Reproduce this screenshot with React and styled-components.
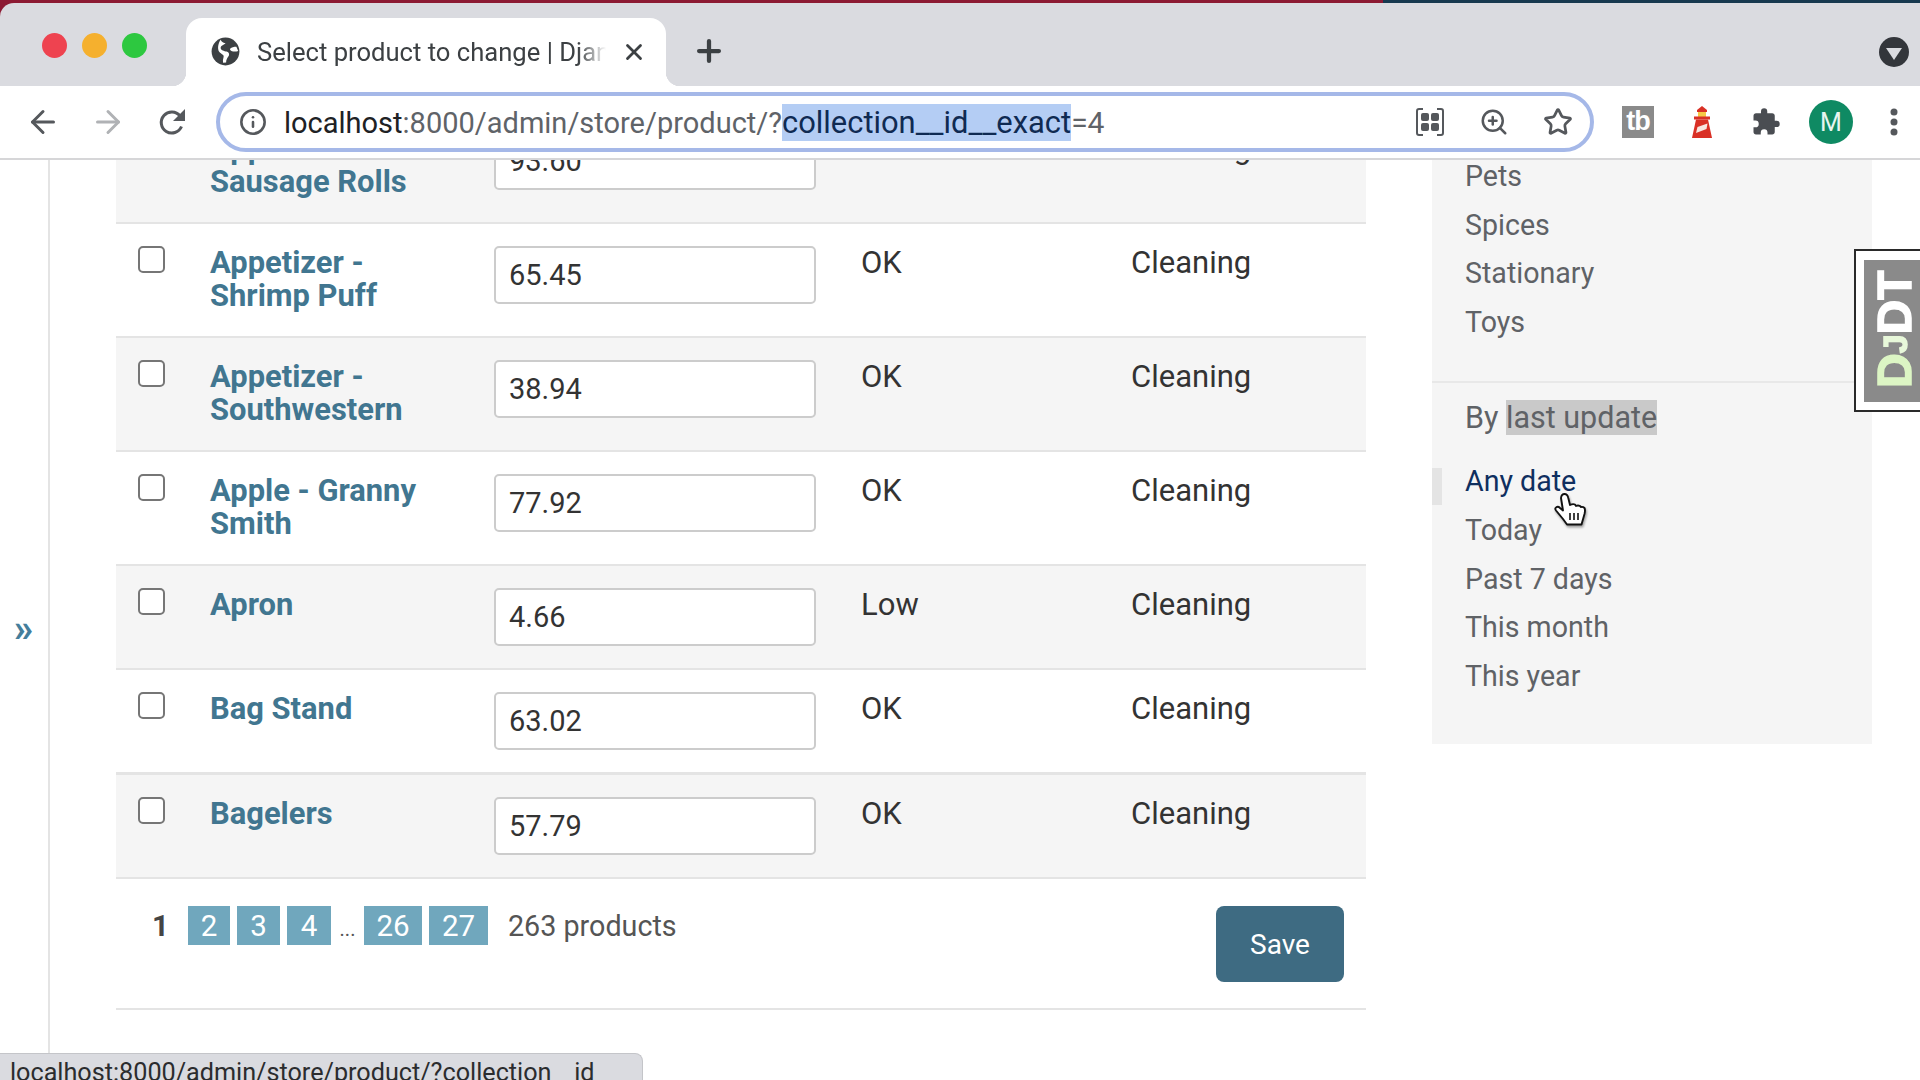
import React from "react";
import styled, { createGlobalStyle } from "styled-components";
import { ArrowLeft, ArrowRight, Info, ZoomIn, Star, Plus, X } from "lucide-react";

const GlobalStyle = createGlobalStyle`
  html, body { margin: 0; padding: 0; height: 100%; background: #fff; overflow: hidden; }
  * { box-sizing: border-box; }
  body { font-family: Roboto, "Liberation Sans", sans-serif; }
`;

const Screen = styled.div`
  position: relative;
  width: 1920px;
  height: 1080px;
  display: flex;
  flex-direction: column;
  overflow: hidden;
  background: linear-gradient(to right, #8c1a33 1383px, #17394f 1383px);
`;

const TabStrip = styled.div`
  height: 83px;
  margin-top: 3px;
  flex: none;
  background: #dadbe0;
  border-top-left-radius: 14px;
  display: flex;
  align-items: flex-end;
  padding-left: 41px;
`;

const Lights = styled.div`
  display: flex;
  gap: 15px;
  align-self: flex-start;
  margin: 30px 0 0 1px;
  width: 144px;
`;

const Light = styled.span`
  width: 25px;
  height: 25px;
  border-radius: 50%;
  background: ${p => p.color};
`;

const Tab = styled.div`
  position: relative;
  width: 480px;
  height: 68px;
  background: #fff;
  border-radius: 16px 16px 0 0;
  display: flex;
  align-items: center;
  padding: 0 0 1px 25px;
  color: #3c4043;
  &::before, &::after {
    content: "";
    position: absolute;
    bottom: 0;
    width: 14px;
    height: 14px;
  }
  &::before {
    left: -14px;
    background: radial-gradient(circle at 0 0, transparent 14px, #fff 14.5px);
  }
  &::after {
    right: -14px;
    background: radial-gradient(circle at 100% 0, transparent 14px, #fff 14.5px);
  }
`;

const TabTitle = styled.span`
  margin-left: 17px;
  width: 349px;
  font-size: 25.6px;
  white-space: nowrap;
  overflow: hidden;
  -webkit-mask-image: linear-gradient(to right, #000 92%, transparent 100%);
  mask-image: linear-gradient(to right, #000 92%, transparent 100%);
`;

const TabClose = styled.span`
  margin-left: 15px;
  display: flex;
`;

const NewTab = styled.span`
  margin: 0 0 7px 26px;
  height: 56px;
  display: flex;
  align-items: center;
  color: #3c4043;
`;

const TabMenu = styled.span`
  margin: 0 11px 19px auto;
  width: 30px;
  height: 30px;
  border-radius: 50%;
  background: #33363b;
  display: flex;
  align-items: center;
  justify-content: center;
  &::after {
    content: "";
    border-left: 8px solid transparent;
    border-right: 8px solid transparent;
    border-top: 12px solid #dadbe0;
    margin-top: 3px;
  }
`;

const Toolbar = styled.div`
  height: 74px;
  flex: none;
  background: #fff;
  border-bottom: 2px solid #d6d6d8;
  display: flex;
  align-items: center;
  color: #55585c;
`;

const NavButton = styled.span`
  width: ${p => p.w}px;
  display: flex;
  justify-content: center;
  color: ${p => (p.off ? "#b0b2b5" : "#55585c")};
`;

const UrlBar = styled.div`
  width: 1378px;
  height: 60px;
  border: 4px solid #a5b8e8;
  border-radius: 30px;
  display: flex;
  align-items: center;
  padding-left: 19px;
  padding-right: 17px;
`;

const UrlText = styled.div`
  margin-left: 17px;
  font-size: 29px;
  white-space: nowrap;
  color: #5f6368;
  flex: 1;
`;

const UrlHost = styled.span`
  color: #202124;
`;

const UrlSelected = styled.span`
  background: #b4cdf4;
  color: #0f2a52;
  font-size: 30.9px;
`;

const UrlEnd = styled.span`
  font-size: 30px;
`;

const UrlIcons = styled.div`
  display: flex;
  align-items: center;
  gap: 34px;
`;

const Extensions = styled.div`
  display: flex;
  align-items: center;
  margin-left: 28px;
`;

const TbBadge = styled.span`
  width: 32px;
  height: 32px;
  background: #8a8a8a;
  color: #fff;
  font-family: "Liberation Sans", sans-serif;
  font-weight: 700;
  font-size: 27px;
  line-height: 31px;
  letter-spacing: -1px;
  text-align: center;
  margin-right: 37px;
`;

const ExtIcon = styled.span`
  display: flex;
  width: ${p => p.w}px;
  margin-right: ${p => p.gap}px;
`;

const Avatar = styled.span`
  width: 44px;
  height: 44px;
  border-radius: 50%;
  background: #0f8a63;
  color: #e6f5ef;
  font-size: 25px;
  display: flex;
  align-items: center;
  justify-content: center;
  margin-right: 37px;
`;

const Page = styled.div`
  flex: 1;
  display: flex;
  overflow: hidden;
  background: #fff;
`;

const NavToggle = styled.div`
  width: 50px;
  flex: none;
  border-right: 2px solid #e4e4e4;
  display: flex;
  align-items: center;
  justify-content: center;
  padding: 15px 1px 0 0;
  color: #447e9b;
  font-size: 39px;
  font-weight: 700;
`;

const Scrolled = styled.div`
  display: flex;
  align-items: flex-start;
  margin-top: -50px;
  padding-left: 66px;
  gap: 66px;
`;

const Results = styled.div`
  width: 1250px;
  flex: none;
`;

const Row = styled.div`
  display: grid;
  grid-template-columns: 94px 284px 367px 270px 1fr;
  padding: 22px 0;
  background: ${p => (p.shaded ? "#f5f5f5" : "#fff")};
  border-bottom: ${p => (p.thick ? 3 : 2)}px solid #e4e4e4;
`;

const CheckCell = styled.div`
  padding-left: 22px;
`;

const Check = styled.input.attrs({ type: "checkbox" })`
  appearance: none;
  display: block;
  width: 27px;
  height: 27px;
  margin: 0;
  background: #fff;
  border: 2px solid #767676;
  border-radius: 5px;
`;

const ProductName = styled.a`
  display: block;
  margin: 0 30px 2px 0;
  font-size: 30.9px;
  line-height: 33px;
  font-weight: 700;
  color: #417690;
`;

const PriceInput = styled.input`
  display: block;
  width: 322px;
  height: 58px;
  padding: 0 13px;
  font-family: inherit;
  font-size: 29px;
  color: #333;
  background: #fff;
  border: 2px solid #ccc;
  border-radius: 5px;
`;

const Cell = styled.div`
  font-size: 31px;
  line-height: 33px;
  color: #333;
`;

const Footer = styled.div`
  height: 131px;
  padding: 27px 22px 0 36px;
  border-bottom: 2px solid #e4e4e4;
  display: flex;
  justify-content: space-between;
  align-items: flex-start;
`;

const Paginator = styled.div`
  display: flex;
  align-items: center;
  height: 39px;
  color: #555;
  font-size: 29.5px;
`;

const CurrentPage = styled.span`
  width: 36px;
  font-weight: 700;
  color: #444;
`;

const PageLink = styled.a`
  height: 39px;
  width: ${p => p.w}px;
  margin-right: 7px;
  background: #70a7bd;
  color: #fff;
  display: flex;
  align-items: center;
  justify-content: center;
`;

const Dots = styled.span`
  width: 19px;
  margin-right: 7px;
  font-size: 20px;
  text-align: center;
  padding-top: 7px;
`;

const Count = styled.span`
  margin-left: 13px;
  font-size: 28.7px;
`;

const SaveButton = styled.button`
  width: 128px;
  height: 76px;
  border: 0;
  border-radius: 8px;
  background: #3e6b82;
  color: #fff;
  font-family: inherit;
  font-size: 28px;
`;

const Filters = styled.div`
  width: 440px;
  flex: none;
  background: #f5f5f5;
  padding-top: 42px;
  height: 634px;
`;

const FilterList = styled.div`
  padding-bottom: ${p => p.pb || 0}px;
`;

const FilterItem = styled.a`
  position: relative;
  display: block;
  height: 48.6px;
  line-height: 48.6px;
  padding-left: 33px;
  font-size: 28.6px;
  color: ${p => (p.selected ? "#0f2f5f" : "#5f6266")};
  ${p =>
    p.selected &&
    `&::before {
      content: "";
      position: absolute;
      left: 0;
      top: 11px;
      width: 10px;
      height: 37px;
      background: #e4e4e4;
    }`}
`;

const FilterHeading = styled.div`
  border-top: 2px solid #e8e8e8;
  padding: 17px 0 21px 33px;
  height: 76px;
  font-size: 30.5px;
  line-height: 36px;
  color: #5f6266;
`;

const Marked = styled.span`
  background: #c9c9c9;
`;

const DebugHandle = styled.div`
  position: absolute;
  right: 0;
  top: 249px;
  width: 66px;
  height: 163px;
  border: 2px solid #2a2a2a;
  border-right: 0;
  background: #fff;
  padding: 9px 0 8px 8px;
`;

const DebugFace = styled.div`
  height: 100%;
  background: #8a8a8a;
  overflow: hidden;
  display: flex;
  justify-content: center;
  align-items: center;
  padding-right: 6px;
  font-family: "Liberation Sans", sans-serif;
  font-weight: 700;
  font-size: 48px;
  line-height: 50px;
  color: #fff;
  -webkit-text-stroke: 1.5px currentColor;
  writing-mode: vertical-rl;
  transform: rotate(180deg);
`;

const DebugLabel = styled.span`
  margin-top: 3px;
`;

const DebugD = styled.span`
  color: #dcf5c4;
`;

const DebugJ = styled.span`
  color: #e8f8da;
  font-size: 34px;
`;

const StatusBar = styled.div`
  position: absolute;
  left: 0;
  bottom: 0;
  width: 643px;
  height: 27px;
  background: #dadbe0;
  border-top: 1px solid #c4c5c9;
  border-right: 1px solid #c4c5c9;
  border-top-right-radius: 8px;
  padding-left: 10px;
  font-size: 25.2px;
  line-height: 37px;
  color: #2b2c2e;
  white-space: nowrap;
  overflow: hidden;
`;

const HandCursor = styled.span`
  position: absolute;
  left: 1540px;
  top: 480px;
  display: flex;
  filter: drop-shadow(1px 2px 1px rgba(0, 0, 0, 0.35));
`;

const Globe = () => (
  <svg width="29" height="29" viewBox="0 0 24 24">
    <circle cx="12" cy="12" r="11.5" fill="#3c4043" />
    <path d="M8 2.500c1 2 3 2.500 4 2.500-1 1.500-4 2-4 4s3 2.500 5 3 2.500 2.500 1.500 4-2 3-2 5l-2.500.3c-.5-2 .5-4 .5-5.500s-3-2-4-4-1-6 1.500-9.800zM21 8c-2 0-4 .5-5 1.500s1 2.500 3 2.500 2.500-.3 3.500-.5z" fill="#fff" />
  </svg>
);

const ReloadIcon = () => (
  <svg width="30" height="28" viewBox="0 0 30 28" fill="none">
    <path d="M23.500 18.500a10.500 10.500 0 1 1-1.500-10.500" stroke="#55585c" strokeWidth="3" />
    <path d="M27 1v12H15z" fill="#55585c" />
  </svg>
);

const QrIcon = () => (
  <svg width="30" height="30" viewBox="0 0 30 30" fill="none" stroke="#55585c" strokeWidth="2">
    <path d="M8 2H4a2 2 0 0 0-2 2v22a2 2 0 0 0 2 2h4M22 2h4a2 2 0 0 1 2 2v22a2 2 0 0 1-2 2h-4" />
    <rect x="6" y="6" width="8" height="8" rx="2" fill="#55585c" stroke="none" />
    <rect x="16" y="6" width="8" height="8" rx="2" fill="#55585c" stroke="none" />
    <rect x="6" y="16" width="8" height="8" rx="2" fill="#55585c" stroke="none" />
    <rect x="16" y="16" width="8" height="8" rx="2" fill="#55585c" stroke="none" />
  </svg>
);

const Lighthouse = () => (
  <svg width="22" height="32" viewBox="0 0 22 32">
    <path d="M11 0l5 4v2H6V4z" fill="#d93025" />
    <rect x="7" y="6" width="8" height="5" fill="#f6c945" />
    <rect x="3" y="10.500" width="16" height="3" fill="#d93025" />
    <path d="M5 13.500h12l4 18.500H1z" fill="#d93025" />
    <path d="M5 27l1.500-6 10-3.500-1 5.500z" fill="#f7e6e0" />
  </svg>
);

const PuzzleIcon = () => (
  <svg width="30" height="32" viewBox="0 0 24 24" fill="#4a4d52">
    <path d="M20.500 11H19V7c0-1.100-.9-2-2-2h-4V3.500a2.500 2.500 0 0 0-5 0V5H4c-1.100 0-2 .9-2 2v3.800h1.500a2.700 2.700 0 0 1 0 5.400H2V20c0 1.100.9 2 2 2h3.800v-1.500a2.700 2.700 0 0 1 5.400 0V22H17c1.100 0 2-.9 2-2v-4h1.500a2.500 2.500 0 0 0 0-5z" />
  </svg>
);

const DotsIcon = () => (
  <svg width="8" height="30" viewBox="0 0 8 30" fill="#55585c">
    <circle cx="4" cy="5" r="3.500" />
    <circle cx="4" cy="15" r="3.500" />
    <circle cx="4" cy="25" r="3.500" />
  </svg>
);

const HandIcon = () => (
  <svg width="70" height="70" viewBox="0 0 70 70">
    <path
      d="M21 18q.5-4 3.500-4 3 0 3.800 4l1.700 7q3-1.500 5-.5l1 1.500q2-1 4 0l1 1q2-.5 3.500 1 1 2 0 6l-3 10.500H27l-4-5.500-7-8.500q-1.500-2 0-3 2-1.500 4 .5l3 2.500z"
      fill="#fff"
      stroke="#111"
      strokeWidth="1.900"
      strokeLinejoin="round"
    />
    <path d="M30 33v7M34 33v7M38 33v7" stroke="#111" strokeWidth="1.600" />
  </svg>
);

const products = [
  { name: "Appetizer - Sausage Rolls", price: "93.60", status: "OK" },
  { name: "Appetizer - Shrimp Puff", price: "65.45", status: "OK" },
  { name: "Appetizer - Southwestern", price: "38.94", status: "OK" },
  { name: "Apple - Granny Smith", price: "77.92", status: "OK" },
  { name: "Apron", price: "4.66", status: "Low" },
  { name: "Bag Stand", price: "63.02", status: "OK" },
  { name: "Bagelers", price: "57.79", status: "OK" },
];

const collections = ["Pets", "Spices", "Stationary", "Toys"];
const dates = ["Any date", "Today", "Past 7 days", "This month", "This year"];
const pages = [["2", 42], ["3", 43], ["4", 44]];
const lastPages = [["26", 58], ["27", 59]];

const App = () => (
  <Screen>
    <GlobalStyle />
    <TabStrip>
      <Lights>
        <Light color="#ee4350" />
        <Light color="#f5b02e" />
        <Light color="#2dc840" />
      </Lights>
      <Tab>
        <Globe />
        <TabTitle>Select product to change | Django site admin</TabTitle>
        <TabClose><X size={26} strokeWidth={2.6} /></TabClose>
      </Tab>
      <NewTab><Plus size={34} strokeWidth={3} /></NewTab>
      <TabMenu />
    </TabStrip>
    <Toolbar>
      <NavButton w={86}><ArrowLeft size={36} strokeWidth={2} /></NavButton>
      <NavButton w={44} off><ArrowRight size={36} strokeWidth={2} /></NavButton>
      <NavButton w={86}><ReloadIcon /></NavButton>
      <UrlBar>
        <Info size={28} strokeWidth={2.2} />
        <UrlText>
          <UrlHost>localhost</UrlHost>:8000/admin/store/product/?
          <UrlSelected>collection__id__exact</UrlSelected><UrlEnd>=4</UrlEnd>
        </UrlText>
        <UrlIcons>
          <QrIcon />
          <ZoomIn size={30} strokeWidth={2} />
          <Star size={30} strokeWidth={2.2} />
        </UrlIcons>
      </UrlBar>
      <Extensions>
        <TbBadge>tb</TbBadge>
        <ExtIcon w={22} gap={38}><Lighthouse /></ExtIcon>
        <ExtIcon w={30} gap={28}><PuzzleIcon /></ExtIcon>
        <Avatar>M</Avatar>
        <DotsIcon />
      </Extensions>
    </Toolbar>
    <Page>
      <NavToggle>»</NavToggle>
      <Scrolled>
        <Results>
          {products.map((p, i) => (
            <Row key={p.name} shaded={i % 2 === 0} thick={i === 5}>
              <CheckCell><Check /></CheckCell>
              <ProductName>{p.name}</ProductName>
              <div><PriceInput defaultValue={p.price} /></div>
              <Cell>{p.status}</Cell>
              <Cell>Cleaning</Cell>
            </Row>
          ))}
          <Footer>
            <Paginator>
              <CurrentPage>1</CurrentPage>
              {pages.map(([n, w]) => <PageLink key={n} w={w}>{n}</PageLink>)}
              <Dots>...</Dots>
              {lastPages.map(([n, w]) => <PageLink key={n} w={w}>{n}</PageLink>)}
              <Count>263 products</Count>
            </Paginator>
            <SaveButton>Save</SaveButton>
          </Footer>
        </Results>
        <Filters>
          <FilterList pb={35}>
            {collections.map(c => <FilterItem key={c}>{c}</FilterItem>)}
          </FilterList>
          <FilterHeading>By <Marked>last update</Marked></FilterHeading>
          <FilterList>
            {dates.map((d, i) => <FilterItem key={d} selected={i === 0}>{d}</FilterItem>)}
          </FilterList>
        </Filters>
      </Scrolled>
    </Page>
    <DebugHandle>
      <DebugFace>
        <DebugLabel><DebugD>D</DebugD><DebugJ>J</DebugJ>DT</DebugLabel>
      </DebugFace>
    </DebugHandle>
    <HandCursor><HandIcon /></HandCursor>
    <StatusBar>localhost:8000/admin/store/product/?collection__id</StatusBar>
  </Screen>
);

export default App;
